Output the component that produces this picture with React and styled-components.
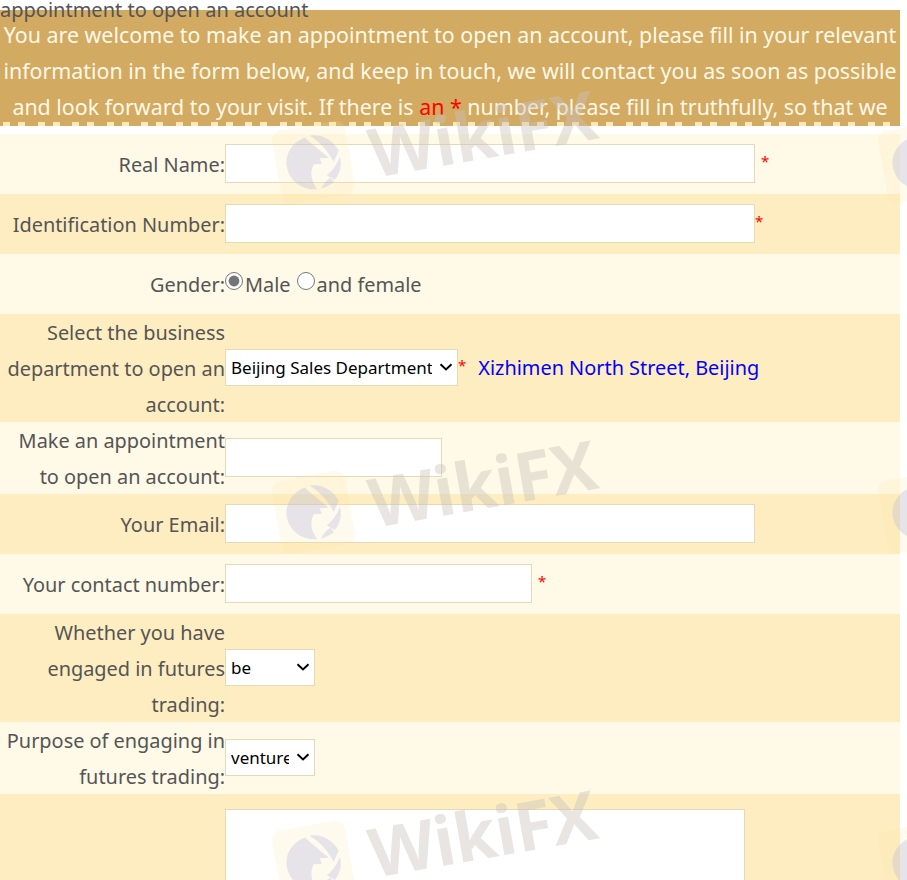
import styled, { createGlobalStyle } from 'styled-components';

const GlobalStyle = createGlobalStyle`
  html, body {
    margin: 0;
    height: 880px;
    overflow: hidden;
    background: #fff;
  }
  body {
    font-family: "Noto Sans", "Open Sans", sans-serif;
    color: #555;
  }
`;

const chevron = "url(\"data:image/svg+xml,%3Csvg xmlns='http://www.w3.org/2000/svg' width='14' height='8' viewBox='0 0 14 8'%3E%3Cpath d='M1.5 1.2 7 6.4l5.5-5.2' fill='none' stroke='%23000' stroke-width='2'/%3E%3C/svg%3E\")";

const Page = styled.div`
  position: relative;
  width: 907px;
  height: 880px;
  overflow: hidden;
`;

const Wrap = styled.div`
  width: 900px;
`;

const Title = styled.div`
  height: 10px;
  font-size: 20px;
  line-height: 20px;
  white-space: nowrap;
  position: relative;
  z-index: 1;
`;

const Banner = styled.div`
  position: relative;
  height: 116px;
  box-sizing: border-box;
  padding-top: 7px;
  overflow: hidden;
  background: #d2aa62;
  color: #fff8e6;
  font-size: 21.4px;
  line-height: 36px;
  text-align: center;
  white-space: nowrap;
  &::after {
    content: '';
    position: absolute;
    left: 0;
    right: 0;
    bottom: 0;
    height: 4px;
    background: repeating-linear-gradient(
      90deg,
      transparent 0 3px,
      #fde9b8 3px 10px,
      transparent 10px 18px,
      #fde9b8 18px 25px,
      transparent 25px 34.6px
    );
  }
`;

const Red = styled.span`
  color: #f00;
`;

const Form = styled.form`
  margin-top: 8px;
`;

const Row = styled.div`
  display: grid;
  grid-template-columns: 225px 1fr;
  align-items: center;
  min-height: ${p => p.$height}px;
  background: ${p => (p.$alt ? '#feedc0' : '#fff9e8')};
  font-size: 19.9px;
  line-height: 36px;
`;

const Label = styled.label`
  text-align: right;
  transform: translateY(1px);
`;

const Field = styled.div`
  display: flex;
  align-items: center;
  padding-bottom: 2px;
`;

const TextInput = styled.input`
  width: ${p => p.$width}px;
  height: 39px;
  box-sizing: border-box;
  border: 1px solid #e6d9b5;
  background: #fff;
  padding: 0 4px;
  outline: none;
`;

const Select = styled.select`
  appearance: none;
  width: ${p => p.$width}px;
  height: 37px;
  box-sizing: border-box;
  border: 1px solid #e6d9b5;
  background: #fff ${chevron} no-repeat right 4px center;
  color: #000;
  font-family: inherit;
  font-size: 17px;
  padding: 0 25px 0 5px;
  border-radius: 0;
  outline: none;
`;

const Star = styled.span`
  color: #f00;
  font-size: 15px;
  line-height: 1;
  margin-left: ${p => p.$gap || 0}px;
  transform: translateY(-2px);
`;

const Radio = styled.input`
  width: 18px;
  height: 18px;
  margin: 0 2px 0 0;
  accent-color: #757575;
  transform: translateY(-2px);
`;

const RadioText = styled.span`
  margin-right: ${p => p.$gap || 0}px;
  transform: translateY(2px);
`;

const Address = styled.span`
  color: #00f;
  margin-left: 12px;
  transform: translateY(1px);
`;

const TextBox = styled.textarea`
  display: block;
  width: 520px;
  height: 120px;
  margin: 15px 0;
  box-sizing: border-box;
  border: 1px solid #e6d9b5;
  background: #fff;
  outline: none;
  resize: none;
`;

const Mark = styled.div`
  position: absolute;
  left: ${p => p.$left}px;
  top: ${p => p.$top}px;
  display: flex;
  align-items: center;
  gap: 19px;
  transform: rotate(-10deg);
  transform-origin: left center;
  opacity: 0.42;
  pointer-events: none;
  z-index: 3;
`;

const MarkText = styled.span`
  font-family: "Open Sans", sans-serif;
  font-weight: 700;
  font-size: 68px;
  line-height: 80px;
  letter-spacing: -0.5px;
  color: #c9c3bd;
`;

function MarkLogo() {
  return (
    <svg width="76" height="76" viewBox="0 0 76 76">
      <rect x="1" y="1" width="74" height="74" rx="9" fill="#fde7a8" fillOpacity="0.45" />
      <g fill="#c4c0cc">
        <path d="M11 38C11 25 21 14 34 12C38 18 43 23 47 28L54 36L45 35L46 41L38 40C33 46 32 55 37 65C22 64 11 52 11 38Z" />
        <path d="M39 11C51 11 61 19 65 31L58 41C55 30 48 19 39 11Z" />
        <path d="M65 37C66 46 62 54 56 59L49 53C56 49 61 44 65 37Z" />
        <path d="M41 65C44 61 47 58 52 56L55 61C51 63 46 65 41 65Z" />
      </g>
    </svg>
  );
}

const marks = [
  [276, 129], [276, 479], [276, 829], [882, 129], [882, 479], [882, 829],
];

export default function App() {
  return (
    <Page>
      <GlobalStyle />
      <Wrap>
        <Title>appointment to open an account</Title>
        <Banner>
          You are welcome to make an appointment to open an account, please fill in your relevant<br />
          information in the form below, and keep in touch, we will contact you as soon as possible<br />
          and look forward to your visit. If there is <Red>an *</Red> number, please fill in truthfully, so that we
        </Banner>
        <Form>
          <Row $height={60}>
            <Label>Real Name:</Label>
            <Field><TextInput $width={530} /><Star $gap={6}>*</Star></Field>
          </Row>
          <Row $height={60} $alt>
            <Label>Identification Number:</Label>
            <Field><TextInput $width={530} /><Star>*</Star></Field>
          </Row>
          <Row $height={60}>
            <Label>Gender:</Label>
            <Field>
              <Radio type="radio" name="gender" defaultChecked /><RadioText $gap={6}>Male</RadioText>
              <Radio type="radio" name="gender" /><RadioText>and female</RadioText>
            </Field>
          </Row>
          <Row $height={108} $alt>
            <Label>Select the business department to open an account:</Label>
            <Field>
              <Select $width={233}><option>Beijing Sales Department</option></Select>
              <Star>*</Star>
              <Address>Xizhimen North Street, Beijing</Address>
            </Field>
          </Row>
          <Row $height={72}>
            <Label>Make an appointment to open an account:</Label>
            <Field><TextInput $width={217} /></Field>
          </Row>
          <Row $height={60} $alt>
            <Label>Your Email:</Label>
            <Field><TextInput $width={530} /></Field>
          </Row>
          <Row $height={60}>
            <Label>Your contact number:</Label>
            <Field><TextInput $width={307} /><Star $gap={6}>*</Star></Field>
          </Row>
          <Row $height={108} $alt>
            <Label>Whether you have engaged in futures trading:</Label>
            <Field><Select $width={90}><option>be</option></Select></Field>
          </Row>
          <Row $height={72}>
            <Label>Purpose of engaging in futures trading:</Label>
            <Field><Select $width={90}><option>venture</option></Select></Field>
          </Row>
          <Row $height={150} $alt>
            <Label />
            <TextBox />
          </Row>
        </Form>
      </Wrap>
      {marks.map(([left, top]) => (
        <Mark key={`${left}-${top}`} $left={left} $top={top}>
          <MarkLogo />
          <MarkText>WikiFX</MarkText>
        </Mark>
      ))}
    </Page>
  );
}
